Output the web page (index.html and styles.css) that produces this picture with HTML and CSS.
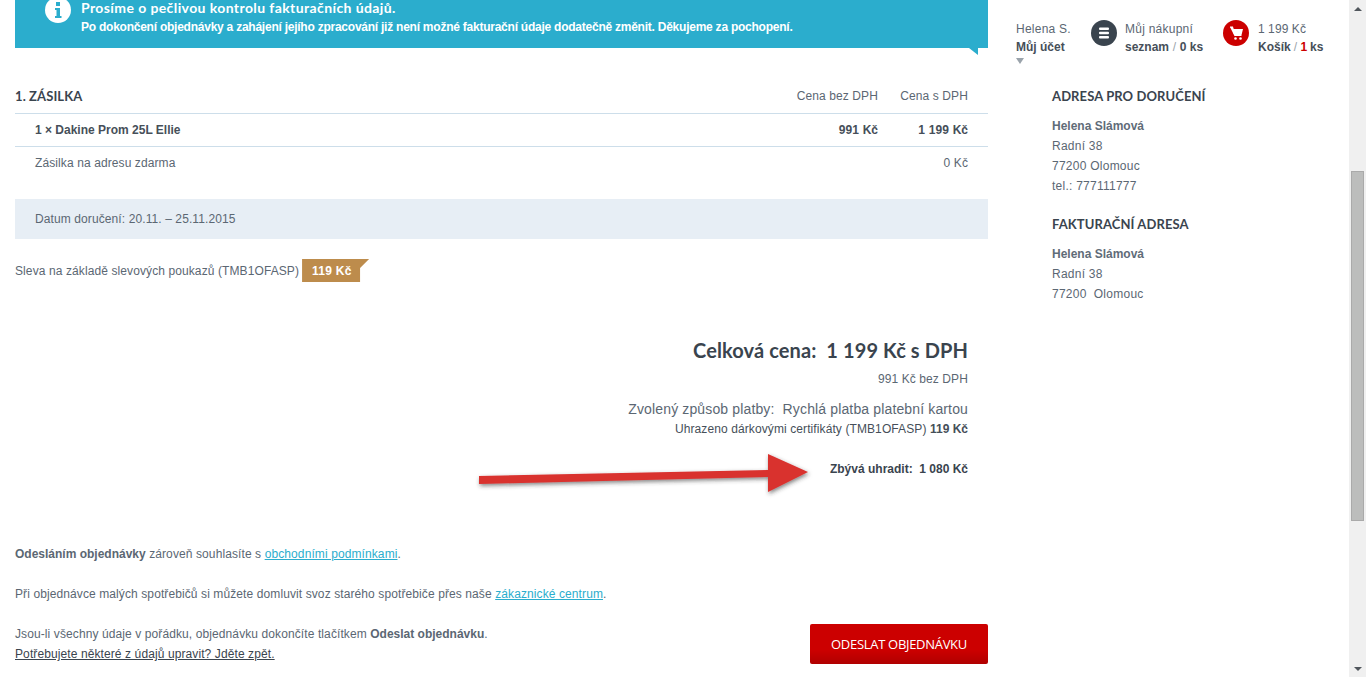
FILE: index.html
```html
<!doctype html>
<html>
  <head>
    <title>Souhrn objednávky</title>
    <meta name="viewport" content="width=device-width">
    <link rel="stylesheet" href="styles.css">
  </head>
  <body>

    <div id="page">
      <div id="main">
        <div class="notice">
          <svg class="notice-icon" width="26" height="26" viewBox="0 0 26 26">
            <circle cx="13" cy="13" r="13" fill="#fff"/>
            <rect x="11" y="5" width="4" height="4" fill="#2badcd"/>
            <path d="M10 11h5v8h1.500v2h-6.500v-2h1.500v-6h-1.500z" fill="#2badcd"/>
          </svg>
          <div>
            <div class="notice-title">Prosíme o pečlivou kontrolu fakturačních údajů.</div>
            <div class="notice-text">Po dokončení objednávky a zahájení jejího zpracování již není možné fakturační údaje dodatečně změnit. Děkujeme za pochopení.</div>
          </div>
        </div>

        <div class="row row-head">
          <div class="row-name heading">1. ZÁSILKA</div>
          <div class="col">Cena bez DPH</div>
          <div class="col">Cena s DPH</div>
        </div>
        <div class="row row-item">
          <div class="row-name">1 × Dakine Prom 25L Ellie</div>
          <div class="col">991 Kč</div>
          <div class="col">1 199 Kč</div>
        </div>
        <div class="row row-ship">
          <div class="row-name">Zásilka na adresu zdarma</div>
          <div class="col">0 Kč</div>
        </div>

        <div class="delivery">Datum doručení: 20.11. – 25.11.2015</div>

        <div class="discount">
          Sleva na základě slevových poukazů (TMB1OFASP)
          <span class="tag">119 Kč</span>
        </div>

        <div class="summary">
          <div class="total">Celková cena:&nbsp; 1 199 Kč s DPH</div>
          <div class="net">991 Kč bez DPH</div>
          <div class="payment">Zvolený způsob platby:&nbsp; Rychlá platba platební kartou</div>
          <div class="paid">Uhrazeno dárkovými certifikáty (TMB1OFASP) <b>119 Kč</b></div>
          <div class="left-to-pay">Zbývá uhradit:&nbsp; 1 080 Kč</div>
        </div>

        <p class="terms"><b>Odesláním objednávky</b> zároveň souhlasíte s <a href="#">obchodními podmínkami</a>.</p>
        <p class="terms">Při objednávce malých spotřebičů si můžete domluvit svoz starého spotřebiče přes naše <a href="#">zákaznické centrum</a>.</p>

        <div class="finish">
          <div class="finish-text">
            Jsou-li všechny údaje v pořádku, objednávku dokončíte tlačítkem <b>Odeslat objednávku</b>.<br>
            <a href="#">Potřebujete některé z údajů upravit? Jděte zpět.</a>
          </div>
          <button class="submit">ODESLAT OBJEDNÁVKU</button>
        </div>
      </div>

      <div id="side">
        <div class="topnav">
          <div class="nav-account">
            Helena S.<br><b>Můj účet</b>
            <div class="caret"></div>
          </div>
          <div class="nav-item nav-list">
            <svg width="26" height="26" viewBox="0 0 26 26">
              <circle cx="13" cy="13" r="13" fill="#3a444e"/>
              <rect x="8" y="7.500" width="10" height="2.500" rx="1" fill="#fff"/>
              <rect x="8" y="11.800" width="10" height="2.500" rx="1" fill="#fff"/>
              <rect x="8" y="16" width="10" height="2.500" rx="1" fill="#fff"/>
            </svg>
            <div>Můj nákupní<br><b>seznam</b> <i>/</i> <b>0 ks</b></div>
          </div>
          <div class="nav-item nav-cart">
            <svg width="26" height="26" viewBox="0 0 26 26">
              <circle cx="13" cy="13" r="13" fill="#cc0000"/>
              <path d="M7 7h2.500l.8 2H20l-1.500 6h-7.500z" fill="#fff"/>
              <path d="M7 7h2.500l2.300 8.500h6.700" fill="none" stroke="#fff" stroke-width="1.200"/>
              <circle cx="12.500" cy="18.500" r="1.300" fill="#fff"/>
              <circle cx="17.500" cy="18.500" r="1.300" fill="#fff"/>
            </svg>
            <div>1 199 Kč<br><b>Košík</b> <i>/</i> <b><em>1</em> ks</b></div>
          </div>
        </div>

        <div class="address">
          <div class="heading">ADRESA PRO DORUČENÍ</div>
          <p><b>Helena Slámová</b><br>Radní 38<br>77200 Olomouc<br>tel.: 777111777</p>
          <div class="heading">FAKTURAČNÍ ADRESA</div>
          <p><b>Helena Slámová</b><br>Radní 38<br>77200&nbsp; Olomouc</p>
        </div>
      </div>

      <div id="scrollbar">
        <div class="arrow-up"></div>
        <div class="thumb"></div>
        <div class="arrow-down"></div>
      </div>
    </div>

    <!-- red annotation arrow drawn over the page -->
    <svg id="annotation" width="345" height="56" viewBox="0 0 345 56">
      <defs>
        <filter id="shade" x="-5%" y="-30%" width="110%" height="170%">
          <feDropShadow dx="1" dy="2" stdDeviation="2" flood-color="#333" flood-opacity="0.6"/>
        </filter>
      </defs>
      <path d="M4 27L293 21L293 5L333 23L293 43L293 28L4 35z" fill="#d9312f" filter="url(#shade)"/>
    </svg>

  </body>
</html>
```

FILE: styles.css
```css
html, body {
  height: 100%;
  width: 100%;
}
body {
  overflow: hidden;
  padding: 0;
  margin: 0;
  background: #fff;
  color: #5b6773;
  font-family: "Liberation Sans", Arial, sans-serif;
  font-size: 12px;
  letter-spacing: 0.1px;
}
#page {
  display: flex;
  height: 677px;
  overflow: hidden;
}
#main {
  width: 973px;
  margin-left: 15px;
  flex-shrink: 0;
}
#side {
  flex: 1;
  padding-top: 20px;
  letter-spacing: 0.25px;
}
b {
  font-weight: bold;
  letter-spacing: 0;
}

.heading {
  font-family: Lato, sans-serif;
  font-weight: bold;
  font-size: 13px;
  letter-spacing: 0.1px;
  color: #3a444e;
}

/* notice */
.notice {
  position: relative;
  display: flex;
  gap: 10px;
  height: 48px;
  box-sizing: border-box;
  padding: 0 0 0 30px;
  background: #2badcd;
  color: #fff;
  font-weight: bold;
}
.notice:after {
  content: "";
  position: absolute;
  right: 10px;
  bottom: -7px;
  border-top: 7px solid #2badcd;
  border-left: 9px solid transparent;
}
.notice-icon {
  margin-top: -3px;
}
.notice-title {
  font-family: Lato, sans-serif;
  font-size: 14px;
  line-height: 16px;
  letter-spacing: 0.4px;
}
.notice-text {
  margin-top: 4px;
  line-height: 14px;
  font-size: 12px;
  letter-spacing: -0.24px;
}

/* shipment rows */
.row {
  display: flex;
  align-items: center;
  border-bottom: 1px solid #cddeea;
  padding-right: 20px;
}
.row-name {
  flex: 1;
}
.col {
  width: 90px;
  text-align: right;
}
.row-head {
  margin-top: 32px;
  height: 31px;
  padding-bottom: 2px;
}
.row-item {
  height: 32px;
  padding-left: 20px;
  font-weight: bold;
  letter-spacing: 0;
  color: #464f59;
}
.row-item .col {
  word-spacing: 0.5px;
}
.row-ship {
  height: 32px;
  padding-left: 20px;
  border-bottom: 0;
}
.delivery {
  margin-top: 20px;
  height: 40px;
  line-height: 40px;
  padding-left: 20px;
  background: #e7eef5;
}
.discount {
  display: flex;
  align-items: flex-start;
  gap: 3px;
  margin-top: 20px;
  height: 23px;
  line-height: 24px;
}
.tag {
  height: 23px;
  width: 67px;
  box-sizing: border-box;
  padding-left: 10px;
  background: #bd8c4c;
  color: #fff;
  font-weight: bold;
  letter-spacing: 0.25px;
  clip-path: polygon(0 0, 67px 0, 58px 9px, 58px 23px, 0 23px);
}

/* totals */
.summary {
  margin-top: 55px;
  padding-right: 20px;
  text-align: right;
}
.total {
  font-family: Lato, sans-serif;
  font-weight: bold;
  font-size: 20px;
  line-height: 26px;
  letter-spacing: 0.1px;
  color: #3a444e;
}
.net {
  margin-top: 9px;
  line-height: 14px;
  letter-spacing: 0.1px;
}
.payment {
  margin-top: 14px;
  font-size: 14px;
  line-height: 18px;
  letter-spacing: 0.14px;
}
.paid {
  margin-top: 4px;
  line-height: 14px;
  letter-spacing: 0.1px;
  color: #464f59;
}
.left-to-pay {
  margin-top: 26px;
  line-height: 14px;
  font-weight: bold;
  letter-spacing: 0;
  color: #3a444e;
}

/* terms */
.terms {
  margin: 0 0 26px;
  line-height: 14px;
}
.terms:first-of-type {
  margin-top: 71px;
}
a {
  color: #2badcd;
}
.finish {
  display: flex;
  justify-content: space-between;
  line-height: 20px;
}
.finish-text {
  margin-top: -3px;
}
.finish-text a {
  color: #3a444e;
}
.submit {
  width: 178px;
  height: 40px;
  margin-top: -3px;
  border: 0;
  border-radius: 2px;
  background: linear-gradient(#cc0000 65%, #b00000);
  color: #fff;
  font-family: "Open Sans", sans-serif;
  font-size: 13px;
  letter-spacing: -0.3px;
}

/* top navigation */
.topnav {
  display: flex;
  padding-left: 28px;
  line-height: 18px;
  height: 56px;
}
.topnav b {
  color: #464f59;
}
.topnav i {
  font-style: normal;
  color: #9aa3ab;
}
.topnav em {
  font-style: normal;
  color: #cc0000;
}
.nav-account {
  width: 75px;
}
.caret {
  width: 0;
  margin-top: 2px;
  border-top: 6px solid #9aa3ab;
  border-left: 4px solid transparent;
  border-right: 4px solid transparent;
}
.nav-item {
  display: flex;
  gap: 8px;
}
.nav-list {
  width: 132px;
}
.nav-cart {
  gap: 9px;
  word-spacing: -0.5px;
}

/* addresses */
.address {
  padding-left: 64px;
  padding-top: 12px;
}
.address p {
  margin: 12px 0 20px;
  line-height: 20px;
}
.address b {
  color: #5f6c78;
}

/* scrollbar */
#scrollbar {
  position: relative;
  width: 17px;
  flex-shrink: 0;
  background: #f0f0f0;
}
.thumb {
  position: absolute;
  top: 171px;
  left: 2px;
  width: 13px;
  height: 350px;
  box-sizing: border-box;
  background: #bcbdbc;
  border: 1px solid #aaa;
}
.arrow-up,
.arrow-down {
  position: absolute;
  left: 5px;
  width: 0;
  border-left: 4px solid transparent;
  border-right: 4px solid transparent;
}
.arrow-up {
  top: 7px;
  border-bottom: 4px solid #50565c;
}
.arrow-down {
  bottom: 6px;
  border-top: 4px solid #50565c;
}

#annotation {
  position: absolute;
  left: 475px;
  top: 449px;
}
```
